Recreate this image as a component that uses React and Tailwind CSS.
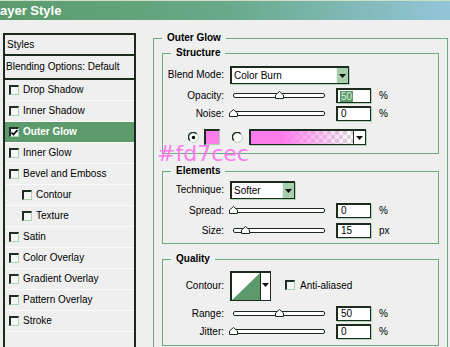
import React from 'react';

function Check({ checked }) {
  return (
    <span className="inline-flex items-center justify-center w-[10px] h-[10px] shrink-0 bg-[#f6f6f6] border-t-2 border-l-2 border-r border-b border-t-[#1f2d22] border-l-[#1f2d22] border-r-[#a9d3b3] border-b-[#a9d3b3]">
      {checked && (
        <svg width="7" height="7" viewBox="0 0 7 7">
          <path d="M0.5 3.5 L2.5 5.5 L6.5 1" fill="none" stroke="#000" strokeWidth="1.6" />
        </svg>
      )}
    </span>
  );
}

function Item({ label, indent, selected }) {
  return (
    <div
      className={
        'h-[21px] flex items-center border-b border-[#fbfbfb] ' +
        (indent ? 'pl-[17px] ' : 'pl-[4px] ') +
        (selected ? 'bg-[#5c9a6b] text-white font-bold' : '')
      }
    >
      <Check checked={selected} />
      <span className="ml-[4px]">{label}</span>
    </div>
  );
}

function Legend({ children }) {
  return <legend className="ml-[8px] px-[5px] font-bold leading-[12px]">{children}</legend>;
}

function Slider({ pos }) {
  return (
    <div className="relative w-[100px] h-[15px] flex items-center shrink-0">
      <div className="ml-[3px] w-[92px] h-[5px] rounded-[2px] border border-[#1c2a1e] bg-white" />
      <svg className="absolute top-[3px]" style={{ left: 3 + pos - 4 }} width="9" height="8" viewBox="0 0 9 8">
        <path d="M0.5 7.5 V4 L4.5 0.5 L8.5 4 V7.5 Z" fill="#fff" stroke="#1c2a1e" />
      </svg>
    </div>
  );
}

function NumBox({ value, selected }) {
  return (
    <div className="ml-[6px] w-[35px] h-[15px] flex items-center pl-[2px] bg-white border-t-2 border-l-2 border-r border-b border-t-[#1d2b1f] border-l-[#1d2b1f] border-r-[#1d2b1f] border-b-[#1d2b1f] shadow-[1px_1px_0_0_#a9d3b3]">
      {selected ? (
        <span className="bg-[#5c9a6b] text-[#dff0df] px-[1px] leading-[11px]">{value}</span>
      ) : (
        <span className="pl-[1px]">{value}</span>
      )}
    </div>
  );
}

function Arrow() {
  return (
    <svg width="7" height="4" viewBox="0 0 7 4">
      <path d="M0 0 H7 L3.5 4 Z" fill="#111" />
    </svg>
  );
}

function Select({ widthClass, value }) {
  return (
    <div className={'ml-[6px] h-[18px] flex bg-white border-t-2 border-l-2 border-r border-b border-[#1d2b1f] shadow-[1px_1px_0_0_#a9d3b3] ' + widthClass}>
      <span className="flex-1 flex items-center pl-[2px]">{value}</span>
      <span className="w-[12px] flex items-center justify-center bg-[#a7cfae] border-l border-[#e9f4eb]">
        <Arrow />
      </span>
    </div>
  );
}

function Radio({ on }) {
  return (
    <svg width="11" height="11" viewBox="0 0 11 11" className="shrink-0">
      <circle cx="5.5" cy="5.5" r="4.8" fill="#fff" stroke="#a9d3b3" />
      <path d="M1.8 8.6 A4.6 4.6 0 0 1 8.6 1.8" fill="none" stroke="#1d2b1f" strokeWidth="1.4" />
      {on && <circle cx="5.5" cy="5.5" r="1.7" fill="#000" />}
    </svg>
  );
}

function Label({ children }) {
  return <span className="w-[61px] shrink-0 text-right">{children}</span>;
}

function SliderRow({ label, pos, value, unit, selected, className }) {
  return (
    <div className={'h-[15px] flex items-center ' + className}>
      <Label>{label}</Label>
      <div className="ml-[6px]">
        <Slider pos={pos} />
      </div>
      <NumBox value={value} selected={selected} />
      <span className="ml-[8px]">{unit}</span>
    </div>
  );
}

export default function App() {
  return (
    <div className="relative w-[450px] h-[347px] overflow-hidden bg-[#efefef] text-[10px] leading-[12px] text-black font-['Liberation_Sans',Arial,sans-serif]">
      <div className="h-[20px] border-t border-[#cfdfc6] bg-gradient-to-r from-[#5b9b6b] via-[#68a98a] to-[#93c5d9]">
        <span className="block -ml-[8px] text-white font-bold text-[13px] leading-[19px]">Layer Style</span>
      </div>

      <div className="flex items-start">
        <div className="mt-[13px] ml-[3px] w-[133px] h-[400px] shrink-0 border-2 border-[#1c2a1e]">
          <div className="h-[21px] flex items-center pl-[2px] border-b-2 border-[#1c2a1e]">Styles</div>
          <div className="h-[24px] flex items-center pl-[1px] border-b-2 border-[#1c2a1e]">Blending Options: Default</div>
          <Item label="Drop Shadow" />
          <Item label="Inner Shadow" />
          <Item label="Outer Glow" selected />
          <Item label="Inner Glow" />
          <Item label="Bevel and Emboss" />
          <Item label="Contour" indent />
          <Item label="Texture" indent />
          <Item label="Satin" />
          <Item label="Color Overlay" />
          <Item label="Gradient Overlay" />
          <Item label="Pattern Overlay" />
          <Item label="Stroke" />
        </div>

        <fieldset className="mt-[12px] ml-[17px] w-[295px] min-w-0 border-t border-l border-r border-[#6cab7b] pb-[20px]">
          <Legend>Outer Glow</Legend>

          <fieldset className="mt-[3px] mx-[8px] min-w-0 border border-[#6cab7b] pb-[8px]">
            <Legend>Structure</Legend>
            <div className="mt-[7px] flex items-center">
              <Label>Blend Mode:</Label>
              <Select widthClass="w-[119px]" value="Color Burn" />
            </div>
            <SliderRow className="mt-[4px]" label="Opacity:" pos={46} value="50" unit="%" selected />
            <SliderRow className="mt-[3px]" label="Noise:" pos={0} value="0" unit="%" />
            <div className="mt-[8px] h-[16px] flex items-center">
              <span className="ml-[25px]"><Radio on /></span>
              <span className="ml-[5px] w-[16px] h-[16px] bg-[#fd7cec] border-t-2 border-l-2 border-r border-b border-t-[#1d2b1f] border-l-[#1d2b1f] border-r-[#a9d3b3] border-b-[#a9d3b3]" />
              <span className="ml-[12px]"><Radio /></span>
              <div className="ml-[6px] w-[117px] h-[16px] flex border-t-2 border-l-2 border-r border-b border-[#1d2b1f] shadow-[1px_1px_0_0_#a9d3b3]">
                <div className="flex-1 bg-[repeating-conic-gradient(#d6d6d6_0%_25%,#ffffff_0%_50%)] bg-[length:8px_8px]">
                  <div className="w-full h-full bg-gradient-to-r from-[#fd7cec] from-30% to-transparent" />
                </div>
                <span className="w-[12px] flex items-center justify-center bg-white border-l border-[#1d2b1f]">
                  <Arrow />
                </span>
              </div>
            </div>
          </fieldset>

          <fieldset className="mt-[11px] mx-[8px] min-w-0 border border-[#6cab7b] pb-[5px]">
            <Legend>Elements</Legend>
            <div className="mt-[4px] flex items-center">
              <Label>Technique:</Label>
              <Select widthClass="w-[65px]" value="Softer" />
            </div>
            <SliderRow className="mt-[4px]" label="Spread:" pos={0} value="0" unit="%" />
            <SliderRow className="mt-[5px]" label="Size:" pos={12} value="15" unit="px" />
          </fieldset>

          <fieldset className="mt-[9px] mx-[8px] min-w-0 border border-[#6cab7b] pb-[6px]">
            <Legend>Quality</Legend>
            <div className="mt-[6px] h-[30px] flex items-center">
              <Label>Contour:</Label>
              <div className="ml-[6px] h-[30px] flex border-t-2 border-l-2 border-r border-b border-[#1d2b1f]">
                <svg width="28" height="27" viewBox="0 0 28 27" className="bg-white">
                  <path d="M0 27 L28 0 V27 Z" fill="#5c9a6b" />
                </svg>
                <span className="w-[10px] flex items-start justify-center pt-[10px] bg-white border-l border-[#1d2b1f]">
                  <Arrow />
                </span>
              </div>
              <span className="ml-[14px]"><Check /></span>
              <span className="ml-[5px]">Anti-aliased</span>
            </div>
            <SliderRow className="mt-[5px]" label="Range:" pos={46} value="50" unit="%" />
            <SliderRow className="mt-[3px]" label="Jitter:" pos={0} value="0" unit="%" />
          </fieldset>
        </fieldset>
      </div>

      <div className="absolute left-[157px] top-[143px] text-[22px] leading-[22px] text-[#fd7cec] font-['DejaVu_Sans',sans-serif] pointer-events-none">
        #fd7cec
      </div>
    </div>
  );
}
